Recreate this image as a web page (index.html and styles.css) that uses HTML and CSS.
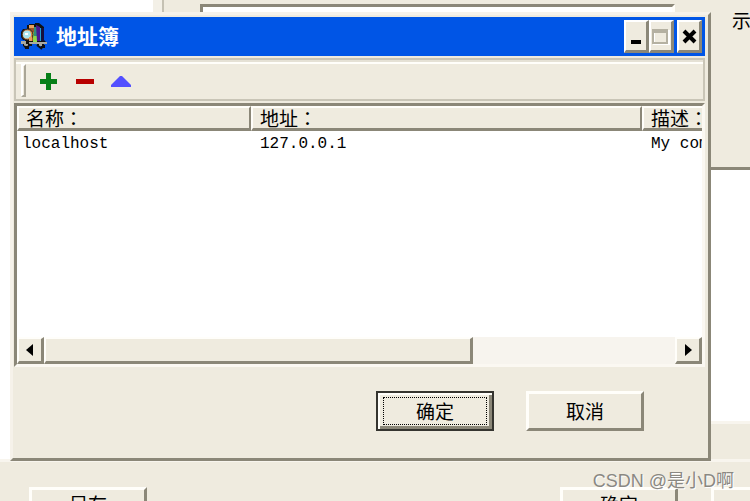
FILE: index.html
```html
<!DOCTYPE html>
<html lang="zh-CN">
<head>
    <meta charset="UTF-8">
    <meta name="viewport" content="width=device-width, initial-scale=1.0">
    <title>地址簿</title>
    <link rel="stylesheet" href="styles.css">
</head>
<body>
    <!-- Window behind the dialog -->
    <div class="back-window">
        <div class="back-field"></div>
        <span class="back-label">示</span>
    </div>
    <div class="back-strip"></div>
    <div class="back-footer">
        <button class="btn">另存</button>
        <button class="btn push">确定</button>
        <button class="btn">取消</button>
    </div>

    <div class="dialog" role="dialog" aria-labelledby="dialogTitle">
        <div class="title-bar">
            <svg class="app-icon" viewBox="0 0 26 27">
                <path fill="#111" d="M8 2V1h6V0h4l5 4v13l2 2v2h-2v4h-3v-3h-4v-3h-5v4H8v3H4v-3H2v-4h2v-2H2l-2-3V9l2-3h4V2z"/>
                <path fill="#9c5228" d="M8 3h5v15H8z"/>
                <path fill="#e8a05c" d="M8 2h5v3H8z"/>
                <path fill="#8fd94a" d="M12 9l4 3v8h-4z"/>
                <path fill="#2f8f7a" d="M13 4h3v9h-3z"/>
                <path fill="#4a1a90" d="M15 2l4 2v14h-3z"/>
                <path fill="#1fa0d0" d="M19 5h1v13h-1z"/>
                <path fill="#16103c" d="M20 5h3v13h-3z"/>
                <path fill="#a9a9a0" d="M0 18h5v3H0zM8 19h5v2H8zM13 19h13v2H13zM3 21h4v2H3zM18 21h3v2h-3z"/>
                <circle cx="6.5" cy="11.5" r="5.5" fill="#d98542" stroke="#222" stroke-width="1"/>
                <circle cx="6" cy="11.5" r="4" fill="#a8e4f0"/>
                <path fill="#fff" d="M4 10h3v2H4z"/>
                <path fill="#e8a05c" d="M8 14h3v4H8z"/>
                <path stroke="#111" stroke-width="2" d="M3 23l3 2M9 21l-3 4M16 22l5 4M23 22v3"/>
            </svg>
            <h1 id="dialogTitle" class="title-text">地址簿</h1>
            <div class="title-buttons">
                <button class="title-btn" aria-label="最小化">
                    <svg viewBox="0 0 20 26"><path d="M5 17h10v4H5z"/></svg>
                </button>
                <button class="title-btn" aria-label="最大化" disabled>
                    <svg viewBox="0 0 20 26"><path fill="none" stroke="#fff" stroke-width="2" d="M3 8h15v13H3z"/><path fill="none" stroke="#b5b1a2" stroke-width="2" d="M2 7h14v13H2zM2 9h14"/></svg>
                </button>
                <button class="title-btn close" aria-label="关闭">
                    <svg viewBox="0 0 20 26"><path fill="none" stroke="#000" stroke-width="4" d="M5 8l11 11M16 8L5 19"/></svg>
                </button>
            </div>
        </div>

        <div class="toolbar">
            <span class="grip"></span>
            <button class="tool-btn" aria-label="添加">
                <svg viewBox="0 0 20 20"><path fill="#078018" d="M7 2h5v6h6v5h-6v6H7v-6H1V8h6z"/></svg>
            </button>
            <button class="tool-btn" aria-label="删除">
                <svg viewBox="0 0 20 20"><path fill="#b80000" d="M1 8h18v5H1z"/></svg>
            </button>
            <button class="tool-btn" aria-label="上移">
                <svg viewBox="0 0 20 20"><path fill="#5350ff" d="M9 5h2l9 9v2H0v-2z"/></svg>
            </button>
        </div>

        <div class="list-view">
            <div class="list-body">
                <table class="list-table">
                    <thead>
                        <tr>
                            <th class="col-name">名称<span class="colon" lang="zh-TW">：</span></th>
                            <th class="col-address">地址<span class="colon" lang="zh-TW">：</span></th>
                            <th>描述<span class="colon" lang="zh-TW">：</span></th>
                        </tr>
                    </thead>
                    <tbody>
                        <tr>
                            <td class="cell-name">localhost</td>
                            <td>127.0.0.1</td>
                            <td>My computer</td>
                        </tr>
                    </tbody>
                </table>
            </div>
            <div class="scrollbar">
                <button class="scroll-btn" aria-label="向左滚动">
                    <svg viewBox="0 0 8 12"><path d="M7 0v12L0 6z"/></svg>
                </button>
                <div class="scroll-track"><div class="scroll-thumb"></div></div>
                <button class="scroll-btn" aria-label="向右滚动">
                    <svg viewBox="0 0 8 12"><path d="M1 0v12l7-6z"/></svg>
                </button>
            </div>
        </div>

        <div class="dialog-buttons">
            <button class="btn btn-default"><span class="focus-box">确定</span></button>
            <button class="btn">取消</button>
        </div>
    </div>

    <div class="watermark">CSDN @是小D啊</div>
</body>
</html>
```
FILE: styles.css
```css
* {
    box-sizing: border-box;
}

body {
    margin: 0;
    height: 100vh;
    position: relative;
    overflow: hidden;
    background: #fff;
    color: #000;
    font-family: "Noto Sans CJK SC", sans-serif;
    font-size: 19px;
}

button {
    font: inherit;
    color: inherit;
    padding: 0;
    margin: 0;
}

svg {
    display: block;
}

/* Windows in the background */
.back-window {
    position: absolute;
    top: 0;
    left: 153px;
    right: 0;
    height: 170px;
    padding: 4px 0 0 38px;
    display: flex;
    justify-content: space-between;
    overflow: hidden;
    background: #efebdf;
    border-left: 9px solid #f3f0e7;
    border-bottom: 3px solid #8b8778;
    box-shadow: inset 2px 0 0 #c5c1b3;
}

.back-field {
    width: 475px;
    height: 40px;
    background: #fff;
    border: 3px solid #8b8778;
    border-right-color: #fffdf8;
}

.back-label {
    width: 18px;
    line-height: 32px;
    white-space: nowrap;
}

.back-strip {
    position: absolute;
    top: 421px;
    left: 153px;
    right: 0;
    height: 40px;
    background: #efebdf;
    border-top: 3px solid #f8f5ee;
}

.back-footer {
    position: absolute;
    top: 459px;
    bottom: 0;
    left: 0;
    right: 0;
    padding: 25px 0 0 29px;
    display: flex;
    gap: 33px;
    overflow: hidden;
    background: #efebdf;
    border-top: 3px solid #f8f5ee;
}

.push {
    margin-left: auto;
}

.back-footer .btn {
    line-height: 28px;
    padding-bottom: 6px;
}

.back-footer .btn:last-child {
    margin-right: -79px;
}

/* Buttons */
.btn {
    flex: none;
    width: 118px;
    height: 40px;
    line-height: 32px;
    background: #efebdf;
    border: 3px solid;
    border-color: #fffefa #8b8778 #8b8778 #fffefa;
}

.btn-default {
    padding: 3px;
    border: 2px solid #35342f;
    box-shadow: inset 2px 2px 0 #fffefa, inset -3px -3px 0 #8b8778;
}

.focus-box {
    display: block;
    height: 28px;
    margin: 0 2px;
    line-height: 26px;
    border: 1px dotted #000;
}

/* Dialog */
.dialog {
    position: absolute;
    top: 12px;
    left: 10px;
    right: 39px;
    padding: 2px 3px 27px 1px;
    background: #efebdf;
    border: 3px solid;
    border-color: #f6f2ea #8b8778 #8b8778 #f6f2ea;
}

.title-bar {
    display: flex;
    align-items: center;
    height: 39px;
    padding: 0 3px 0 7px;
    background: #0055e6;
}

.app-icon {
    width: 26px;
    height: 27px;
}

.title-text {
    margin: 0 auto 4px 9px;
    font-size: 21px;
    font-weight: bold;
    line-height: 30px;
    color: #fff;
}

.title-buttons {
    display: flex;
}

.title-btn {
    width: 25px;
    height: 33px;
    background: #efebdf;
    border: 2px solid;
    border-color: #fff #8b8778 #8b8778 #fff;
    border-right-width: 3px;
    border-bottom-width: 3px;
}

.title-btn svg {
    width: 20px;
    height: 26px;
}

.close {
    margin-left: 3px;
}

.toolbar {
    display: flex;
    align-items: center;
    gap: 16px;
    height: 43px;
    margin-top: 2px;
    padding: 5px 5px 3px 5px;
    border: 2px solid #c9c5b7;
    box-shadow: inset 0 2px 0 #e5e1d5, inset 0 4px 0 #fffefa;
}

.grip {
    width: 5px;
    height: 33px;
    margin-right: -3px;
    border: 2px solid;
    border-color: #fff #aaa697 #aaa697 #fff;
}

.tool-btn {
    width: 20px;
    height: 20px;
    background: none;
    border: 0;
}

/* Address list */
.list-view {
    display: flex;
    flex-direction: column;
    height: 264px;
    margin-top: 2px;
    background: #fff;
    border: 3px solid;
    border-color: #8b8778 #fbf8f2 #fbf8f2 #8b8778;
}

.list-body {
    flex: 1;
    overflow: hidden;
}

.list-table {
    width: 840px;
    table-layout: fixed;
    border-collapse: separate;
    border-spacing: 0;
}

.list-table th {
    height: 25px;
    padding: 0 0 0 7px;
    font-weight: normal;
    line-height: 20px;
    text-align: left;
    background: #efebdf;
    border: 2px solid;
    border-color: #fffefa #8b8778 #8b8778 #fffefa;
    border-bottom-width: 3px;
}

.list-table td {
    padding: 0 0 0 9px;
    font-family: "Liberation Mono", monospace;
    font-size: 16px;
    line-height: 26px;
}

.list-table .cell-name {
    padding-left: 5px;
}

.col-name {
    width: 234px;
}

.col-address {
    width: 391px;
}

/* full-width colon sits in the middle of its cell in the TC face */
.colon {
    font-family: "Noto Sans CJK TC", sans-serif;
}

.scrollbar {
    display: flex;
    height: 27px;
}

.scroll-btn {
    display: flex;
    align-items: center;
    justify-content: center;
    width: 27px;
}

.scroll-btn svg {
    width: 8px;
    height: 12px;
}

.scroll-btn,
.scroll-thumb {
    background: #efebdf;
    border: 2px solid;
    border-color: #fffefa #8b8778 #8b8778 #fffefa;
    border-right-width: 3px;
    border-bottom-width: 3px;
}

.scroll-track {
    flex: 1;
    background: #f7f4ee;
}

.scroll-thumb {
    width: 68%;
    height: 100%;
}

.dialog-buttons {
    display: flex;
    justify-content: flex-end;
    gap: 32px;
    padding: 24px 61px 0 0;
}

.watermark {
    position: absolute;
    right: 16px;
    bottom: 6px;
    font-family: "Liberation Sans", "Noto Sans CJK SC", sans-serif;
    font-size: 18px;
    line-height: 28px;
    color: #8a8882;
    text-shadow: 1px 1px 0 #fff;
}
```
